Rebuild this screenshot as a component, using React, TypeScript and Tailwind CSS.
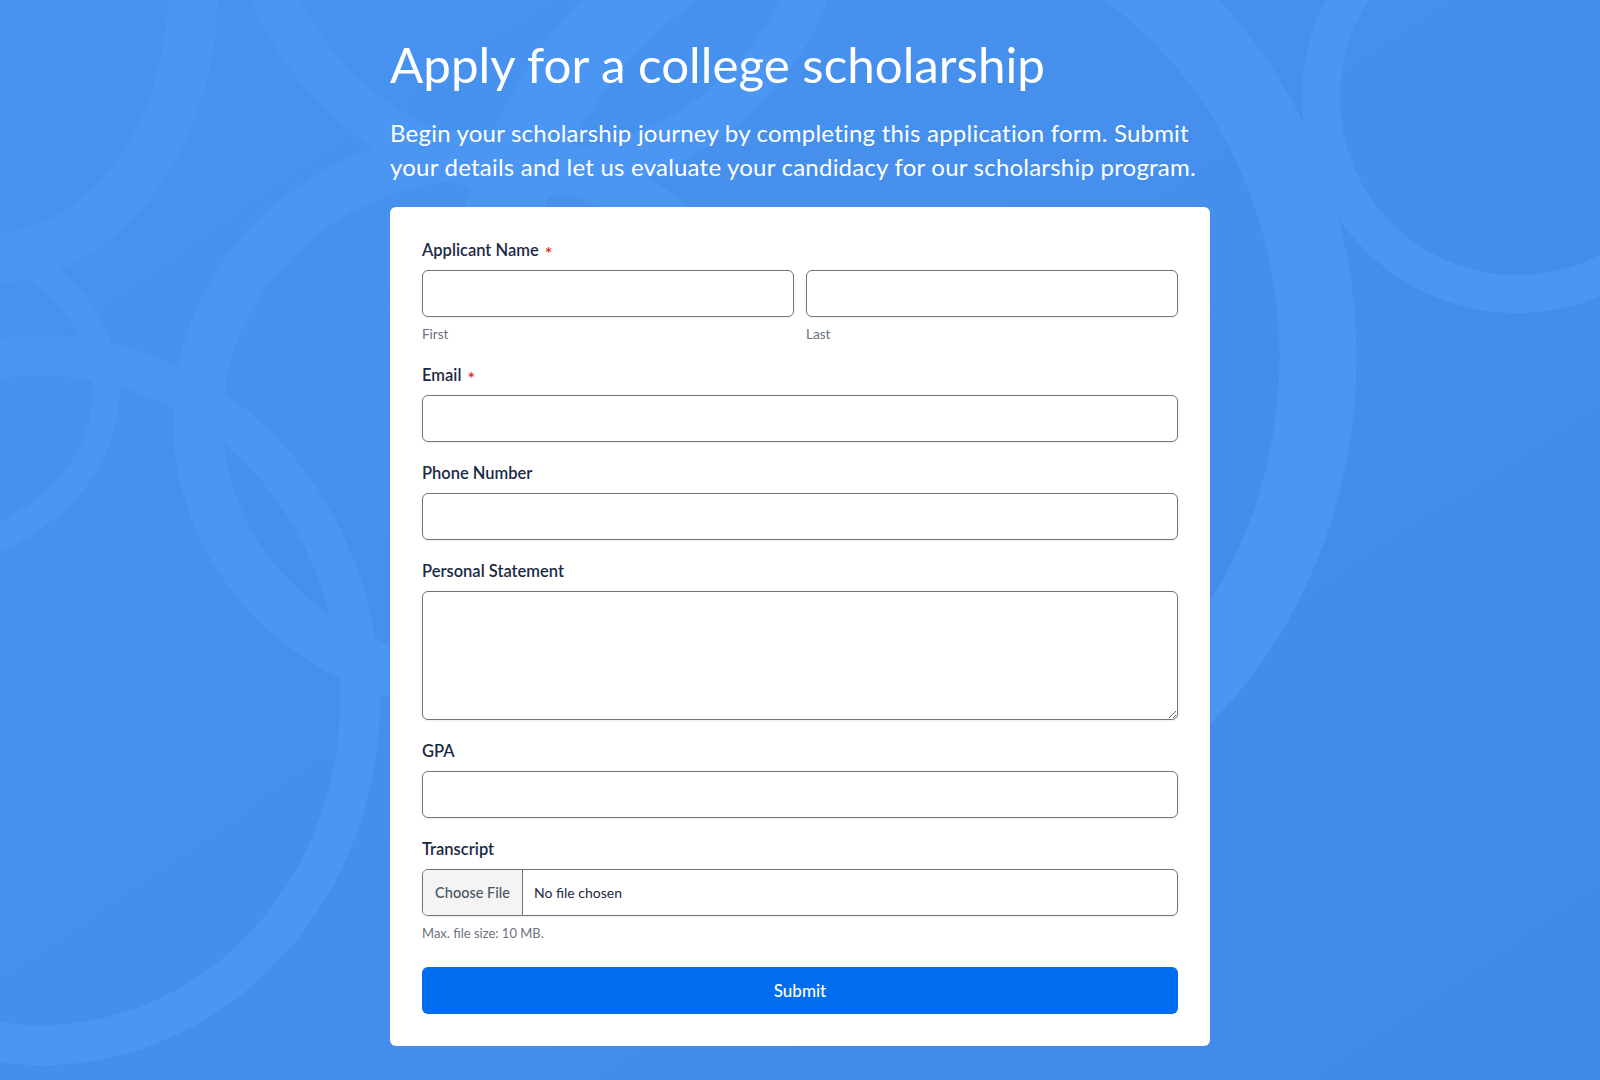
import type { ReactNode } from "react";

function Backdrop() {
  // faint rings drawn over the blue background
  return (
    <svg
      className="pointer-events-none absolute inset-0 h-full w-full"
      viewBox="0 0 1600 1080"
      preserveAspectRatio="none"
      fill="none"
      stroke="#4b96f3"
    >
      <ellipse cx="-10" cy="-10" rx="203" ry="268" strokeWidth="50" />
      <circle cx="540" cy="-115" r="288" strokeWidth="45" />
      <ellipse cx="-100" cy="392" rx="206" ry="165" strokeWidth="27" />
      <ellipse cx="480" cy="420" rx="282" ry="265" strokeWidth="50" />
      <ellipse cx="40" cy="700" rx="320" ry="345" strokeWidth="40" />
      <ellipse cx="900" cy="357" rx="418" ry="461" strokeWidth="77" />
      <circle cx="1517" cy="98" r="196" strokeWidth="38" />
    </svg>
  );
}

function FieldLabel({
  children,
  required,
}: {
  children: ReactNode;
  required?: boolean;
}) {
  return (
    <label className="mb-[9px] flex h-[22px] items-center text-[16.5px] font-semibold leading-[22px] text-[#1b2a44]">
      {children}
      {required && (
        <span className="ml-[6px] translate-y-[3px] text-[18px] leading-none text-[#d93025]">
          *
        </span>
      )}
    </label>
  );
}

const inputCls =
  "block h-[47px] w-full rounded-md border border-[#6e737d] bg-white px-3 text-[15px] text-[#1b2a44] shadow-[0_1px_3px_rgba(0,0,0,0.08)] outline-none";

export default function App() {
  return (
    <div className="relative min-h-screen overflow-hidden bg-gradient-to-br from-[#4993f0] to-[#4189e7] font-[Lato,'Noto_Sans',sans-serif]">
      <Backdrop />

      <div className="relative mx-auto w-[820px] pt-[35px] pb-[34px]">
        <h1 className="text-[49.3px] font-normal leading-[1.2] text-white">
          Apply for a college scholarship
        </h1>
        <p className="mt-[22px] text-[24px] leading-[1.4] tracking-[0.22px] text-white">
          Begin your scholarship journey by completing this application form.
          Submit your details and let us evaluate your candidacy for our
          scholarship program.
        </p>

        <form className="mt-6 rounded-md bg-white p-8">
          <div>
            <FieldLabel required>Applicant Name</FieldLabel>
            <div className="grid grid-cols-2 gap-3">
              <div>
                <input className={inputCls} />
                <div className="mt-[7px] text-[13.5px] leading-5 text-[#6b7280]">First</div>
              </div>
              <div>
                <input className={inputCls} />
                <div className="mt-[7px] text-[13.5px] leading-5 text-[#6b7280]">Last</div>
              </div>
            </div>
          </div>

          <div className="mt-5">
            <FieldLabel required>Email</FieldLabel>
            <input type="email" className={inputCls} />
          </div>

          <div className="mt-5">
            <FieldLabel>Phone Number</FieldLabel>
            <input className={inputCls} />
          </div>

          <div className="mt-5">
            <FieldLabel>Personal Statement</FieldLabel>
            <textarea className="block h-[129px] w-full rounded-md border border-[#6e737d] bg-white px-3 py-2 text-[15px] shadow-[0_1px_3px_rgba(0,0,0,0.08)] outline-none" />
          </div>

          <div className="mt-5">
            <FieldLabel>GPA</FieldLabel>
            <input className={inputCls} />
          </div>

          <div className="mt-5">
            <FieldLabel>Transcript</FieldLabel>
            <div className="flex h-[47px] w-full items-stretch overflow-hidden rounded-md border border-[#6e737d] bg-white shadow-[0_1px_3px_rgba(0,0,0,0.08)]">
              <div className="flex w-[100px] items-center justify-center border-r border-[#6e737d] bg-[#f4f4f5] text-[14.5px] font-medium text-[#4b5563]">
                Choose File
              </div>
              <div className="flex items-center pl-[11px] text-[14px] text-[#1b2a44]">
                No file chosen
              </div>
            </div>
            <div className="mt-[7px] text-[13px] leading-5 text-[#6b7280]">
              Max. file size: 10 MB.
            </div>
          </div>

          <button
            type="button"
            className="mt-6 flex h-[47px] w-full items-center justify-center rounded-md bg-[#006cf0] text-[17px] font-medium text-white"
          >
            Submit
          </button>
        </form>
      </div>
    </div>
  );
}
